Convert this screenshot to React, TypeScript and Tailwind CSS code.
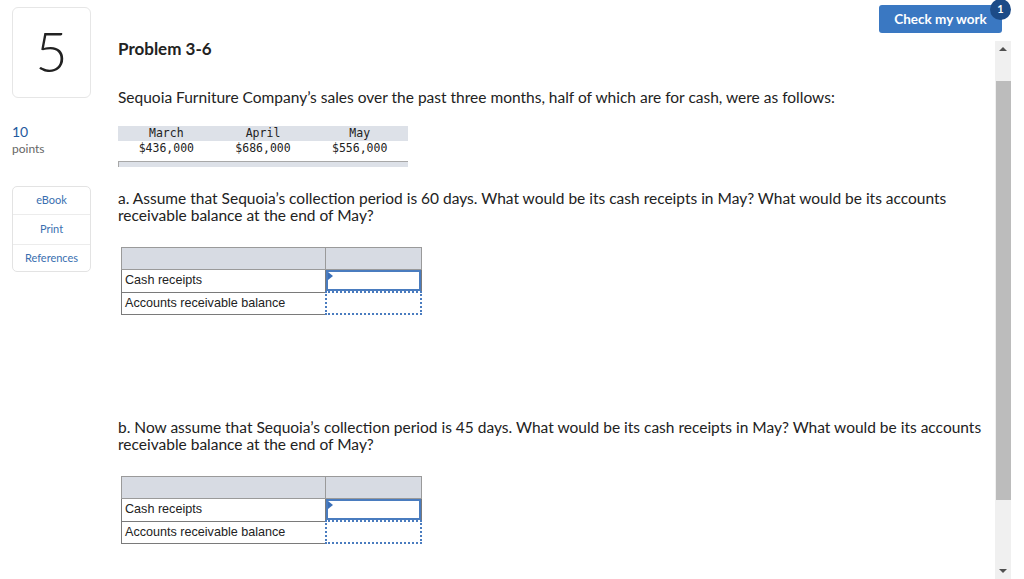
import React from 'react';

const salesCols = [
    { month: 'March', amount: '$436,000' },
    { month: 'April', amount: '$686,000' },
    { month: 'May', amount: '$556,000' },
];

function AnswerTable() {
    return (
        <table className="border-collapse w-[301px] font-['Liberation_Sans',Arial,sans-serif] text-[12.6px] leading-[15px] text-[#222]">
            <tbody>
                <tr className="h-[22px]">
                    <td className="w-[204px] bg-[#d7dbe3] border border-[#9a9a9a]"></td>
                    <td className="bg-[#d7dbe3] border border-[#9a9a9a]"></td>
                </tr>
                <tr className="h-[22px]">
                    <td className="border border-[#7a7a7a] px-[3px]">Cash receipts</td>
                    <td className="p-0 border border-[#7a7a7a]">
                        <div className="relative h-[21px] border-2 border-[#4a7cbf] bg-white">
                            <span className="absolute left-0 top-0 w-0 h-0 border-t-[4px] border-b-[4px] border-l-[5px] border-t-transparent border-b-transparent border-l-[#3a6fb8]"></span>
                        </div>
                    </td>
                </tr>
                <tr className="h-[22px]">
                    <td className="border border-[#7a7a7a] px-[3px]">Accounts receivable balance</td>
                    <td className="p-0 border-2 border-dotted border-[#4a7cbf]"></td>
                </tr>
            </tbody>
        </table>
    );
}

export default function App() {
    return (
        <div className="relative w-[1024px] h-[579px] bg-white overflow-hidden font-['Lato','Open_Sans',sans-serif] text-[#222]">
            <div className="flex">
                {/* columna izquierda */}
                <div className="w-[118px] shrink-0 pl-[12px] pt-[7px]">
                    <div className="w-[79px] h-[91px] border border-[#e6e6e6] rounded-[6px] flex items-center justify-center">
                        <span className="text-[56px] leading-none font-light text-[#222] -mt-[4px]">5</span>
                    </div>
                    <div className="mt-[25px] text-[14px] leading-[18px] text-[#1f5a9e]">10</div>
                    <div className="text-[12px] leading-[16px] text-[#666]">points</div>
                    <div className="mt-[29px] w-[79px] border border-[#e3e3e3] rounded-[5px] text-[11px] text-[#3a6fb0] text-center">
                        <div className="h-[28px] flex items-center justify-center border-b border-[#ececec]">eBook</div>
                        <div className="h-[30px] flex items-center justify-center border-b border-[#ececec]">Print</div>
                        <div className="h-[26px] flex items-center justify-center">References</div>
                    </div>
                </div>

                {/* contenido principal */}
                <div className="flex-1 pt-[38px] pr-[40px]">
                    <h1 className="text-[17px] leading-[22px] font-bold text-[#222]">Problem 3-6</h1>
                    <p className="mt-[29px] text-[15.5px] leading-[17px]">
                        Sequoia Furniture Company’s sales over the past three months, half of which are for cash, were as follows:
                    </p>

                    <div className="mt-[20px] w-[290px] font-['DejaVu_Sans_Mono',monospace] text-[11.5px] text-[#222]">
                        <div className="flex h-[15px] bg-[#dde1e8] items-center">
                            {salesCols.map(c => (
                                <div key={c.month} className="flex-1 text-center pt-[1px]">{c.month}</div>
                            ))}
                        </div>
                        <div className="flex h-[15px] items-center">
                            {salesCols.map(c => (
                                <div key={c.month} className="flex-1 text-center pt-[1px]">{c.amount}</div>
                            ))}
                        </div>
                        <div className="mt-[5px] h-[6px] bg-[#dde1e8] border-t border-l border-[#a8a8a8]"></div>
                    </div>

                    <p className="mt-[23px] text-[15.5px] leading-[17px] pr-[20px]">
                        a. Assume that Sequoia’s collection period is 60 days. What would be its cash receipts in May? What would be its accounts receivable balance at the end of May?
                    </p>
                    <div className="mt-[23px] ml-[3px]">
                        <AnswerTable />
                    </div>

                    <p className="mt-[104px] text-[15.5px] leading-[17px]">
                        b. Now assume that Sequoia’s collection period is 45 days. What would be its cash receipts in May? What would be its accounts receivable balance at the end of May?
                    </p>
                    <div className="mt-[23px] ml-[3px]">
                        <AnswerTable />
                    </div>
                </div>
            </div>

            {/* boton */}
            <button className="absolute left-[879px] top-[5px] w-[123px] h-[28px] bg-[#3a78c2] rounded-[3px] text-white text-[13.5px] font-bold">
                Check my work
            </button>
            <span className="absolute left-[990px] top-[-1px] w-[21px] h-[21px] rounded-full bg-[#1c4b87] text-white text-[11px] font-bold flex items-center justify-center">1</span>

            {/* barra de desplazamiento */}
            <div className="absolute left-[995px] top-[41px] w-[16px] h-[538px] bg-[#f0f0f0] flex flex-col items-center">
                <div className="h-[16px] flex items-center justify-center">
                    <span className="w-0 h-0 border-l-[4px] border-r-[4px] border-b-[4px] border-l-transparent border-r-transparent border-b-[#505050]"></span>
                </div>
                <div className="mt-[24px] w-[15px] h-[419px] bg-[#bcbcbc]"></div>
                <div className="mt-auto h-[16px] flex items-center justify-center">
                    <span className="w-0 h-0 border-l-[4px] border-r-[4px] border-t-[4px] border-l-transparent border-r-transparent border-t-[#505050]"></span>
                </div>
            </div>
        </div>
    );
}
